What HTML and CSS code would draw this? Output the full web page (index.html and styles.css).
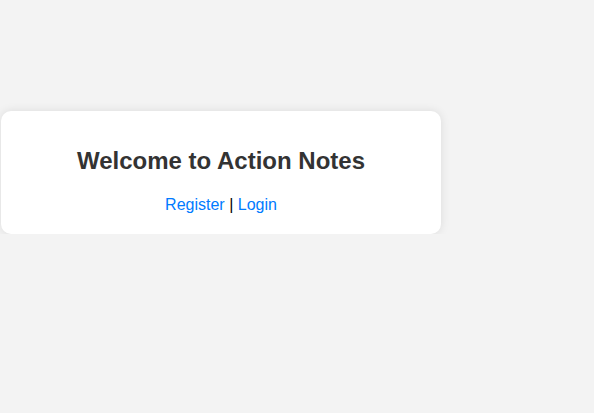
FILE: index.html
```html
<!DOCTYPE html>
<html lang="en">
<head>
<meta charset="utf-8">
<title>Action Notes</title>
<link rel="stylesheet" href="styles.css">
</head>
<body>
<main class="page">
  <section class="card">
    <h2 class="title">Welcome to Action Notes</h2>
    <p class="links"><a href="#">Register</a> | <a href="#">Login</a></p>
  </section>
</main>
</body>
</html>
```

FILE: styles.css
```css
html, body {
  margin: 0;
  padding: 0;
}
body {
  background: #f3f3f3;
  font-family: "Liberation Sans", Arial, sans-serif;
  color: #000;
}
.page {
  padding: 111px 0 0 1px;
}
.card {
  width: 440px;
  box-sizing: border-box;
  background: #fff;
  border-radius: 10px;
  box-shadow: 0 0 10px rgba(0, 0, 0, 0.1);
  padding: 36px 20px 20px;
  text-align: center;
}
.title {
  margin: 0 0 21px;
  font-size: 24px;
  font-weight: bold;
  color: #333;
}
.links {
  margin: 0;
  font-size: 16px;
}
.links a {
  color: #007bff;
  text-decoration: none;
}
```
